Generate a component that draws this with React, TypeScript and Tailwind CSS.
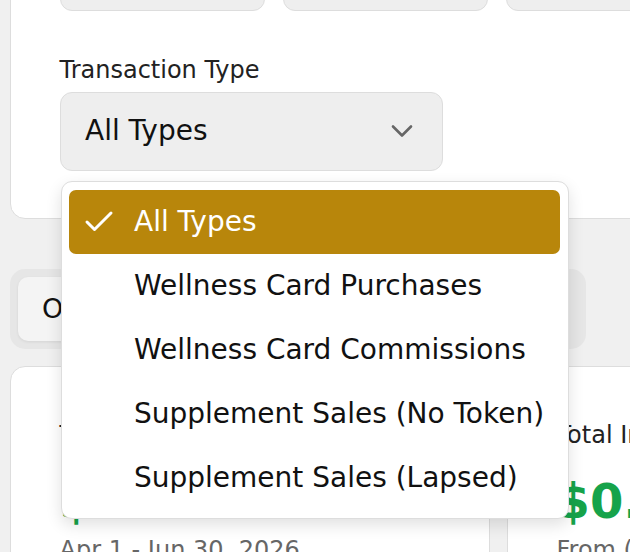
import { Check, ChevronDown } from "lucide-react";

const types = [
  "All Types",
  "Wellness Card Purchases",
  "Wellness Card Commissions",
  "Supplement Sales (No Token)",
  "Supplement Sales (Lapsed)",
];

export default function App() {
  const selected = "All Types";

  return (
    <div className="h-[552px] w-[630px] overflow-hidden bg-[#f0f0f0] font-['DejaVu_Sans',sans-serif] text-[#111111]">
      <div className="-mt-[100px] w-[1200px] pl-[10px]">
        {/* filters card */}
        <div className="rounded-[15px] border-[1.5px] border-[#dddddd] bg-white px-[48.5px] pb-[47.5px] pt-[48px]">
          <div className="flex gap-[18px]">
            <div className="h-[61.5px] w-[205px] rounded-[12px] border-[1.5px] border-[#dddddd] bg-[#eeeeee]" />
            <div className="h-[61.5px] w-[205px] rounded-[12px] border-[1.5px] border-[#dddddd] bg-[#eeeeee]" />
            <div className="h-[61.5px] w-[205px] rounded-[12px] border-[1.5px] border-[#dddddd] bg-[#eeeeee]" />
          </div>

          <label className="mt-[41px] mb-[4px] block text-[24px] leading-[1.5] text-[#222222]">
            Transaction Type
          </label>
          <div className="relative w-[383px]">
            <button className="flex h-[79px] w-full items-center justify-between rounded-[12px] border-[1.5px] border-[#dddddd] bg-[#eeeeee] pl-[24.5px] pr-[21.5px] text-[28px] leading-[1.5] text-[#111111]">
              <span>{selected}</span>
              <ChevronDown size={36} strokeWidth={1.75} className="text-[#666666]" />
            </button>

            {/* open listbox */}
            <div className="absolute left-[1px] top-[89px] z-10 w-[508px] rounded-[11px] border-[1.5px] border-[#dddddd] bg-white px-[7.5px] pt-[8px] pb-[8.5px] shadow-[0_6px_16px_rgba(0,0,0,0.12)]">
              {types.map((t) => (
                <div
                  key={t}
                  className={`flex h-[64px] items-center rounded-[7px] pl-[12px] text-[28px] leading-[1.5] ${
                    t === selected ? "bg-[#b8860b] text-white" : "text-[#111111]"
                  }`}
                >
                  <span className="flex w-[36px] shrink-0 items-center justify-center">
                    {t === selected && <Check size={36} strokeWidth={2} />}
                  </span>
                  <span className="ml-[17px] whitespace-nowrap">{t}</span>
                </div>
              ))}
            </div>
          </div>
        </div>

        {/* tabs */}
        <div className="mt-[50px] flex w-[576px] gap-[8px] rounded-[15px] bg-[#e6e6e6] p-[8px]">
          <button className="h-[64px] rounded-[10px] bg-[#f4f4f4] px-[24px] text-[27px] leading-[1.5] text-[#111111] shadow-[0_1px_3px_rgba(0,0,0,0.08)]">
            Overview
          </button>
          <button className="h-[64px] rounded-[10px] px-[24px] text-[27px] leading-[1.5] text-[#555555]">
            Transactions
          </button>
        </div>

        {/* stat cards */}
        <div className="mt-[17px] grid grid-cols-[480px_480px] gap-[17px]">
          <div className="rounded-[15px] border-[1.5px] border-[#dddddd] bg-white px-[48.5px] pt-[50px] pb-[48px]">
            <p className="text-[24px] leading-[1.5] text-[#222222]">Total Revenue</p>
            <p className="mt-[20px] text-[48px] font-bold leading-[1.2] text-[#16a34a]">$0.00</p>
            <p className="mt-[1px] text-[24px] leading-[1.5] text-[#666666]">Apr 1 - Jun 30, 2026</p>
          </div>
          <div className="rounded-[15px] border-[1.5px] border-[#dddddd] bg-white px-[48.5px] pt-[50px] pb-[48px]">
            <p className="text-[24px] leading-[1.5] text-[#222222]">Total Income</p>
            <p className="mt-[20px] text-[48px] font-bold leading-[1.2] text-[#16a34a]">$0.00</p>
            <p className="mt-[1px] text-[24px] leading-[1.5] text-[#666666]">From (0 transactions)</p>
          </div>
        </div>
      </div>
    </div>
  );
}
